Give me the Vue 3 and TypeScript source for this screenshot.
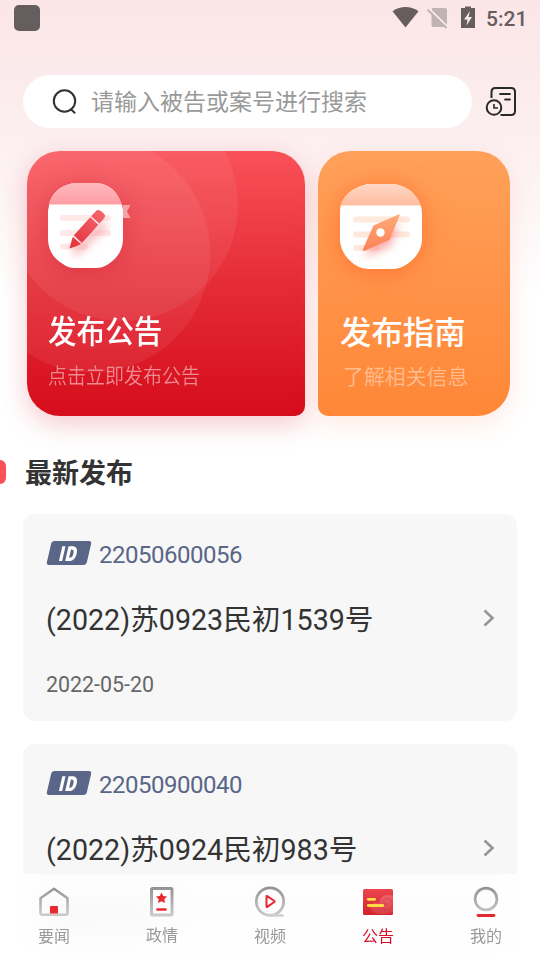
<script setup lang="ts">
interface Notice {
  id: string
  title: string
  date: string
}
interface Tab {
  key: string
  label: string
}

const notices: Notice[] = [
  { id: '22050600056', title: '(2022)苏0923民初1539号', date: '2022-05-20' },
  { id: '22050900040', title: '(2022)苏0924民初983号', date: '2022-05-20' },
]
const tabs: Tab[] = [
  { key: 'news', label: '要闻' },
  { key: 'politics', label: '政情' },
  { key: 'video', label: '视频' },
  { key: 'bulletin', label: '公告' },
  { key: 'mine', label: '我的' },
]
const active = 'bulletin'
</script>

<template>
  <div class="screen">
    <header class="status">
      <span class="app-dot"></span>
      <svg class="status-icons" width="84" height="24" viewBox="0 0 84 24">
        <path d="M0.500 5.200Q13.500-3.200 26.500 5.200L13.500 21.500Z" fill="#655d5e" />
        <path d="M40 2h13q2 0 2 2v17H41.500q-2 0-2-2V7Z" fill="#bfb3b4" />
        <path d="M36.800 2.500L57 22" stroke="#fbe9e9" stroke-width="2" />
        <path d="M35.300 3.500L54.500 22" stroke="#bfb3b4" stroke-width="1.800" />
        <path d="M69 2h4V.5h6V2h4v20H69Z" fill="#655d5e" />
        <path d="M78 5l-6 8.500h3.500l-1 6 5.500-8.500h-3.500Z" fill="#fbe9e9" />
      </svg>
      <span class="clock">5:21</span>
    </header>

    <div class="search-row">
      <div class="search">
        <svg width="26" height="28" viewBox="0 0 26 28" fill="none" stroke="#303030" stroke-width="2">
          <circle cx="12.500" cy="13" r="10.700" />
          <path d="M18.800 21.300l4.400 4" />
        </svg>
        <span>请输入被告或案号进行搜索</span>
      </div>
      <svg class="history" width="32" height="32" viewBox="0 0 32 32" fill="none" stroke="#292929" stroke-width="2">
        <path d="M6.500 12V6q0-4 4-4H26q4 0 4 4v19q0 4-4 4H15.500" />
        <path d="M15.200 8h9.600M20.200 13.500h4.600" stroke-width="2.200" stroke-linecap="round" />
        <circle cx="9" cy="21.500" r="7.300" />
        <path d="M9 18v4h4" stroke-width="1.600" />
      </svg>
    </div>

    <div class="cards">
      <section class="card red">
        <svg class="rings" width="278" height="265" viewBox="0 0 278 265">
          <circle cx="95" cy="54" r="116" fill="#fff" fill-opacity=".065" />
          <circle cx="65" cy="103" r="118.500" fill="#fff" fill-opacity=".065" />
        </svg>
        <svg class="emblem" width="84" height="86" viewBox="0 0 84 86">
          <defs>
            <linearGradient id="redCap" x2="0" y2="1"><stop stop-color="#ffb9be" /><stop offset="1" stop-color="#fe9da3" /></linearGradient>
            <linearGradient id="pen" gradientUnits="userSpaceOnUse" x1="0" y1="0" x2="47" y2="0"><stop stop-color="#e22f3a" /><stop offset="1" stop-color="#f4636a" /></linearGradient>
            <clipPath id="redTile"><path d="M26 0H49Q67 2 73 20Q75 23 75 29V57Q74 74 57 83Q53 85 49 85H26Q20 85 15 81Q1 73 0 57V28Q1 22 2 18Q8 3 26 0Z" /></clipPath>
            <filter id="soft" x="-50%" y="-50%" width="200%" height="200%"><feGaussianBlur stdDeviation="4" /></filter>
          </defs>
          <path d="M75 22h7.500l-3.500 6.500 3.500 6.500H75Z" fill="#f5a2a7" />
          <g clip-path="url(#redTile)">
            <rect width="75" height="86" fill="#fff" />
            <rect width="75" height="21.500" fill="url(#redCap)" />
            <path d="M15 35h45M15 50h45M15 63.500h22" stroke="#ffe9e9" stroke-width="6" stroke-linecap="round" />
            <path d="M26 70L57 40" stroke="#f47882" stroke-opacity=".5" stroke-width="9" filter="url(#soft)" />
            <g transform="translate(21.500 65.500) rotate(-48)" fill="url(#pen)">
              <path d="M0 0L11-5.500V5.500Q6 4 0 0Z" />
              <path d="M12.500-5.500H37V5.500H12.500Z" />
              <path d="M38.500-5.500H45Q49-5.500 49-1V2Q49 5.500 45 5.500H38.500Z" />
            </g>
          </g>
        </svg>
        <h2>发布公告</h2>
        <p>点击立即发布公告</p>
      </section>

      <section class="card orange">
        <svg class="emblem" width="82" height="86" viewBox="0 0 82 86">
          <defs>
            <linearGradient id="orangeCap" x2="0" y2="1"><stop stop-color="#ffd7c5" /><stop offset="1" stop-color="#ffbd9f" /></linearGradient>
            <linearGradient id="needle" x2="0" y2="1"><stop stop-color="#ffab76" /><stop offset="1" stop-color="#fb8159" /></linearGradient>
            <clipPath id="orangeTile"><path d="M28 0H54Q73 3 80 20Q82 24 82 29V57Q80 73 64 82Q59 85 54 85H28Q22 85 17 82Q2 73 0 57V28Q0 22 2 18Q9 4 28 0Z" /></clipPath>
            <filter id="softOrange" x="-50%" y="-50%" width="200%" height="200%"><feGaussianBlur stdDeviation="4" /></filter>
          </defs>
          <g clip-path="url(#orangeTile)">
            <rect width="82" height="86" fill="#fff" />
            <rect width="82" height="21.500" fill="url(#orangeCap)" />
            <path d="M16 35.500h51M16 50.500h51M16 64h21" stroke="#ffe8dc" stroke-width="6" stroke-linecap="round" />
            <path d="M24 73L37 49 60 39 50 63Z" fill="#f87878" fill-opacity=".6" filter="url(#softOrange)" />
            <path d="M60 30.500L49.500 56 24 67Q22.500 67 23 65L33.500 41.500 58.500 30.500Z" fill="url(#needle)" />
            <circle cx="40.500" cy="48.500" r="4.200" fill="#fff" />
          </g>
        </svg>
        <h2>发布指南</h2>
        <p>了解相关信息</p>
      </section>
    </div>

    <div class="section-head"><i></i><h3>最新发布</h3></div>

    <main class="list">
      <article v-for="n in notices" :key="n.id" class="notice">
        <div class="id-row">
          <span class="id-badge"><b>ID</b></span>
          <span class="id-number">{{ n.id }}</span>
        </div>
        <div class="title-row">
          <span>{{ n.title }}</span>
          <svg width="12" height="18" viewBox="0 0 12 18" fill="none" stroke="#969696" stroke-width="2.600"><path d="M1.500 1.500L9.500 9l-8 7.500" /></svg>
        </div>
        <time>{{ n.date }}</time>
      </article>
    </main>

    <nav class="tabbar">
      <div v-for="t in tabs" :key="t.key" class="tab" :class="[t.key, { active: t.key === active }]">
        <svg width="32" height="32" viewBox="0 0 32 32" fill="none">
          <defs>
            <linearGradient :id="'line-' + t.key" gradientUnits="userSpaceOnUse" x1="0" y1="1" x2="0" y2="31">
              <stop stop-color="#929292" /><stop offset="1" stop-color="#cdcdcd" />
            </linearGradient>
          </defs>
          <template v-if="t.key === 'news'">
            <path d="M2.500 12.200L16 2.700l13.500 9.500V27q0 1.800-1.800 1.800H4.300q-1.800 0-1.800-1.800Z" stroke="url(#line-news)" stroke-width="2.500" stroke-linejoin="round" />
            <path d="M12 27.500V21q0-1 1-1h6q1 0 1 1v6.500Z" fill="#e9292f" />
          </template>
          <template v-else-if="t.key === 'politics'">
            <rect x="5.500" y="2.500" width="20.500" height="26.500" rx="1" stroke="url(#line-politics)" stroke-width="3" />
            <path d="M15.500 6.500l1.700 3.400 3.900.6-2.800 2.700.7 3.900-3.500-1.800-3.500 1.800.7-3.900-2.800-2.700 3.900-.6Z" fill="#e9292f" />
            <path d="M11.500 23.500h8" stroke="#e9292f" stroke-width="2.600" stroke-linecap="round" />
          </template>
          <template v-else-if="t.key === 'video'">
            <circle cx="16" cy="15.500" r="13.700" stroke="url(#line-video)" stroke-width="2.700" />
            <path d="M16 29.500h12.500" stroke="#cecece" stroke-width="2.500" stroke-linecap="round" />
            <path d="M12.500 10.500v10q0 .8.800.4l7-4.900q.6-.5 0-1l-7-4.900q-.8-.4-.8.400Z" stroke="#e9292f" stroke-width="2" />
          </template>
          <template v-else-if="t.key === 'bulletin'">
            <defs>
              <linearGradient id="bulletinFill" x2="0" y2="1"><stop stop-color="#ec464e" /><stop offset="1" stop-color="#d3222b" /></linearGradient>
              <clipPath id="bulletinClip"><rect x="1" y="3" width="30" height="26" rx="1.500" /></clipPath>
            </defs>
            <rect x="1" y="3" width="30" height="26" rx="1.500" fill="url(#bulletinFill)" />
            <g clip-path="url(#bulletinClip)">
              <path d="M31 9.500C24 7 17 10 17 17q-6-2-8 2t2 7q9 5 20 0Z" fill="#fff" fill-opacity=".12" />
              <path d="M31 12q-8-4-11 2-2 7 4 7 5 0 4-4-2-3-5-1" stroke="#fff" stroke-opacity=".1" stroke-width="1.600" />
            </g>
            <path d="M6.300 13.300h6.400M6.300 19.500h14.400" stroke="#ffdc45" stroke-width="2.800" stroke-linecap="round" />
          </template>
          <template v-else>
            <circle cx="16" cy="13" r="10.900" stroke="url(#line-mine)" stroke-width="2.700" />
            <path d="M8 29.500h16" stroke="#e52931" stroke-width="2.800" stroke-linecap="round" />
          </template>
        </svg>
        <span>{{ t.label }}</span>
      </div>
    </nav>
  </div>
</template>

<style>
body { background: #fff; }
</style>

<style scoped>
.screen {
  width: 540px;
  height: 960px;
  overflow: hidden;
  position: relative;
  box-sizing: border-box;
  font-family: Roboto, "Noto Sans CJK SC", sans-serif;
  background: linear-gradient(#fbe6e7 0, #fceeef 130px, #fff 300px);
}
h2, h3, p { margin: 0; }
svg { display: block; flex: none; }
.status { height: 37px; display: flex; align-items: center; padding: 0 13px 0 14px; box-sizing: border-box; }
.app-dot { width: 26px; height: 26px; border-radius: 5px; background: #655d5e; margin-top: -1px; }
.status-icons { margin-left: auto; margin-top: -1px; }
.clock { font-size: 21px; line-height: 24px; font-weight: 500; color: #655d5e; width: 41px; margin-left: 10px; white-space: nowrap; margin-top: 1px; }
.search-row { margin-top: 38px; height: 53px; padding-left: 23px; display: flex; align-items: center; }
.search { width: 449px; height: 53px; border-radius: 27px; background: #fff; display: flex; align-items: center; padding-left: 29px; box-sizing: border-box; color: #999; font-size: 23px; line-height: 34px; }
.search span { margin-left: 13px; padding-top: 2px; }
.history { margin-left: 13px; }
.cards { display: flex; gap: 13px; margin-top: 23px; padding-left: 27px; }
.card { box-sizing: border-box; height: 265px; position: relative; color: #fff; }
.red { width: 278px; border-radius: 33px 33px 10px 33px; background: linear-gradient(#fa5158 0, #e52c36 50%, #d50c1b 100%); padding: 32px 0 0 21px; box-shadow: 0 8px 26px rgba(218, 40, 55, .25); }
.orange { width: 192px; border-radius: 33px 33px 33px 10px; background: linear-gradient(#ffa05a, #ff8737); padding: 32px 0 0 22px; box-shadow: 0 8px 26px rgba(255, 112, 65, .15); }
.rings { position: absolute; left: 0; top: 0; border-radius: 33px 33px 10px 33px; }
.emblem { position: relative; }
.red .emblem { filter: drop-shadow(0 3px 12px rgba(205, 28, 41, .4)); }
.orange .emblem { filter: drop-shadow(0 3px 12px rgba(255, 91, 32, .55)); margin-top: 1px; }
.card h2 { font-size: 31.400px; font-weight: 500; line-height: 40px; margin-top: 44px; white-space: nowrap; transform-origin: left; }
.card p { font-size: 20.900px; font-weight: 350; line-height: 28px; margin-top: 9px; white-space: nowrap; transform-origin: left; }
.red h2, .red p { position: relative; transform: scaleX(.91); }
.red p { color: #ee8a91; }
.orange p { color: #ffbd90; margin-left: 3px; }
.section-head { height: 40px; margin-top: 36px; display: flex; align-items: center; }
.section-head i { width: 6px; height: 24px; border-radius: 0 6px 6px 0; background: #fb5157; }
.section-head h3 { margin-left: 19px; padding-top: 3px; color: #333; font-size: 27px; line-height: 40px; font-weight: 700; }
.list { margin-top: 22px; padding: 0 23px; display: flex; flex-direction: column; gap: 23px; }
.notice { height: 207px; box-sizing: border-box; border-radius: 12px; background: #f7f7f7; padding: 23px 22px 0 23px; }
.id-row { display: flex; align-items: center; height: 34px; }
.id-badge { width: 40px; height: 24px; margin: -2px 2.500px 0; border-radius: 3px; background: #5a6688; transform: skewX(-13deg); color: #fff; display: flex; align-items: center; justify-content: center; }
.id-badge b { font-family: "Open Sans", sans-serif; font-weight: 800; font-size: 20.500px; line-height: 24px; letter-spacing: .8px; padding-bottom: 1px; transform: scaleX(.78); }
.id-number { margin-left: 8px; padding-top: 2px; color: #5a6688; font-size: 24px; letter-spacing: -.48px; line-height: 34px; }
.title-row { display: flex; justify-content: space-between; align-items: center; height: 42px; margin-top: 27px; color: #333; font-size: 28.650px; line-height: 42px; white-space: nowrap; }
.title-row span { padding-top: 2px; }
.title-row svg { margin-top: -3px; }
.notice time { display: block; margin-top: 29px; color: #666; font-size: 21.400px; line-height: 32px; }
.tabbar { position: absolute; left: 0; right: 0; bottom: 0; height: 86px; display: flex; background: rgba(255, 255, 255, .78); backdrop-filter: blur(16px); }
.tab { flex: 1; display: flex; flex-direction: column; align-items: center; padding-top: 12px; color: #999; font-size: 16px; line-height: 24px; }
.tab span { margin-top: 7px; }
.tab.politics span { margin-top: 6px; }
.tab.active { color: #d91026; }
</style>
